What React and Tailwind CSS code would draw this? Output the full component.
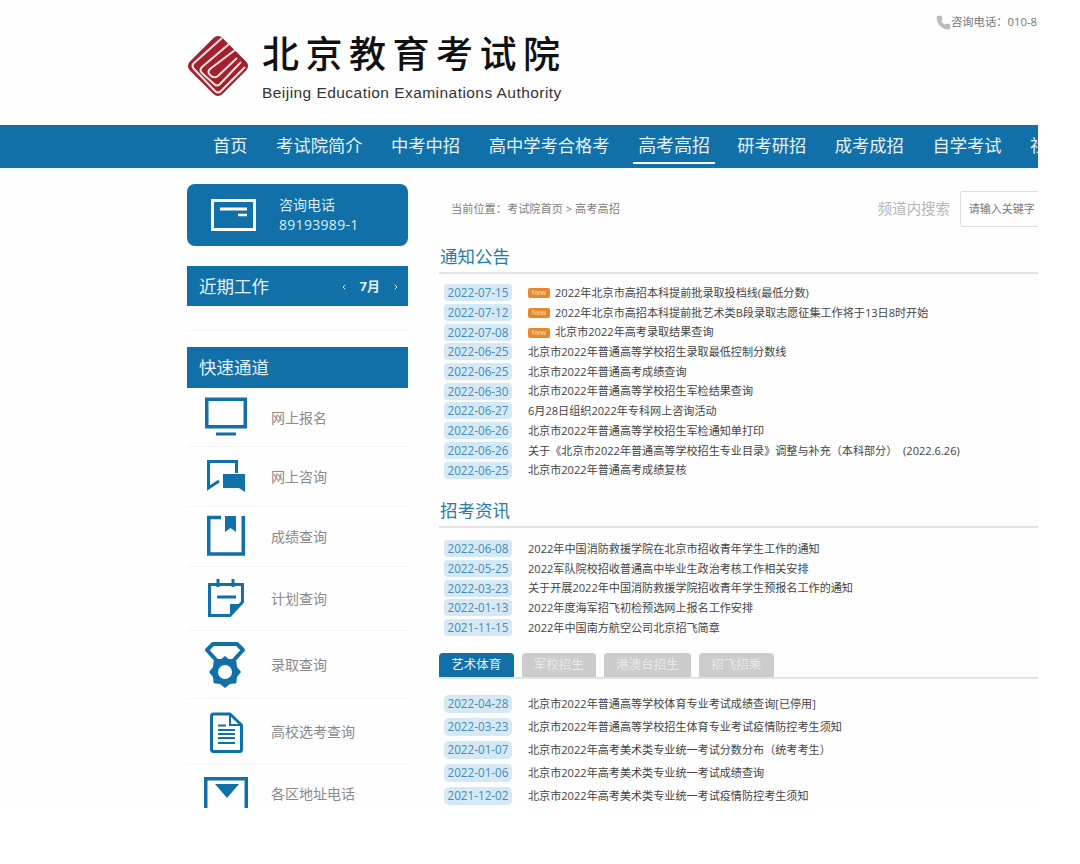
import React from 'react';
import { ChevronLeft, ChevronRight, Phone } from 'lucide-react';

const navItems = ['首页', '考试院简介', '中考中招', '高中学考合格考', '高考高招', '研考研招', '成考成招', '自学考试', '社'];

const notices = [
  ['2022-07-15', '2022年北京市高招本科提前批录取投档线(最低分数)', true],
  ['2022-07-12', '2022年北京市高招本科提前批艺术类B段录取志愿征集工作将于13日8时开始', true],
  ['2022-07-08', '北京市2022年高考录取结果查询', true],
  ['2022-06-25', '北京市2022年普通高等学校招生录取最低控制分数线'],
  ['2022-06-25', '北京市2022年普通高考成绩查询'],
  ['2022-06-30', '北京市2022年普通高等学校招生军检结果查询'],
  ['2022-06-27', '6月28日组织2022年专科网上咨询活动'],
  ['2022-06-26', '北京市2022年普通高等学校招生军检通知单打印'],
  ['2022-06-26', '关于《北京市2022年普通高等学校招生专业目录》调整与补充（本科部分）\u00a0\u00a0(2022.6.26)'],
  ['2022-06-25', '北京市2022年普通高考成绩复核'],
];

const news = [
  ['2022-06-08', '2022年中国消防救援学院在北京市招收青年学生工作的通知'],
  ['2022-05-25', '2022军队院校招收普通高中毕业生政治考核工作相关安排'],
  ['2022-03-23', '关于开展2022年中国消防救援学院招收青年学生预报名工作的通知'],
  ['2022-01-13', '2022年度海军招飞初检预选网上报名工作安排'],
  ['2021-11-15', '2022年中国南方航空公司北京招飞简章'],
];

const arts = [
  ['2022-04-28', '北京市2022年普通高等学校体育专业考试成绩查询[已停用]'],
  ['2022-03-23', '北京市2022年普通高等学校招生体育专业考试疫情防控考生须知'],
  ['2022-01-07', '北京市2022年高考美术类专业统一考试分数分布（统考考生）'],
  ['2022-01-06', '北京市2022年高考美术类专业统一考试成绩查询'],
  ['2021-12-02', '北京市2022年高考美术类专业统一考试疫情防控考生须知'],
];

const BLUE = '#1170a8';

function MonitorIcon() {
  return (
    <svg width="50" height="50" viewBox="0 0 50 50" fill="none">
      <rect x="5.750" y="7.250" width="38.500" height="27.500" stroke={BLUE} strokeWidth="3.500" />
      <rect x="15" y="40.500" width="20" height="3" fill={BLUE} />
    </svg>
  );
}

function ChatIcon() {
  return (
    <svg width="50" height="50" viewBox="0 0 50 50" fill="none">
      <path d="M35.500 21V9.500H7.500V36L18 29" stroke={BLUE} strokeWidth="3" />
      <path d="M22 22h22v18l-6-4H22z" fill={BLUE} />
    </svg>
  );
}

function BookIcon() {
  return (
    <svg width="50" height="50" viewBox="0 0 50 50" fill="none">
      <path d="M20 5.500H7.750V42H42.250V4" stroke={BLUE} strokeWidth="3.500" />
      <path d="M24 4h11v16l-5.500-4-5.500 4z" fill={BLUE} />
    </svg>
  );
}

function CalendarIcon() {
  return (
    <svg width="50" height="50" viewBox="0 0 50 50" fill="none">
      <path d="M8.500 10.500h33V28L29 41.500H8.500z" stroke={BLUE} strokeWidth="3" />
      <path d="M17 5v8M32 5v8" stroke={BLUE} strokeWidth="3" />
      <path d="M16 23h19" stroke={BLUE} strokeWidth="3" />
      <path d="M29 41.500V30h12.500z" fill={BLUE} />
    </svg>
  );
}

function MedalIcon() {
  return (
    <svg width="50" height="50" viewBox="0 0 50 50" fill="none">
      <path d="M12 4h24l6 6-10 11H16L6 10z" stroke={BLUE} strokeWidth="4" strokeLinejoin="round" />
      <polygon points="24,16 29,20 35.300,20.700 36,27 40,32 36,37 35.300,43.300 29,44 24,48 19,44 12.700,43.300 12,37 8,32 12,27 12.700,20.700 19,20" fill={BLUE} />
      <circle cx="24" cy="32" r="7" fill="#fff" />
    </svg>
  );
}

function DocIcon() {
  return (
    <svg width="50" height="50" viewBox="0 0 50 50" fill="none">
      <path d="M12.500 7H29l11.500 11v24.500a2 2 0 0 1-2 2h-26a2 2 0 0 1-2-2V9a2 2 0 0 1 2-2z" stroke={BLUE} strokeWidth="3" strokeLinejoin="round" />
      <path d="M29 7v11h11.500" stroke={BLUE} strokeWidth="2" />
      <path d="M17 18.500h8M17 23h17M17 27h17M17 31h17M17 36h17" stroke={BLUE} strokeWidth="2" />
    </svg>
  );
}

function MailIcon() {
  return (
    <svg width="50" height="50" viewBox="0 0 50 50" fill="none">
      <rect x="4.750" y="9.750" width="40.500" height="36" stroke={BLUE} strokeWidth="3.500" />
      <path d="M14 15h24L26 29z" fill={BLUE} />
    </svg>
  );
}

const channels = [
  ['网上报名', MonitorIcon, 'h-[59px]'],
  ['网上咨询', ChatIcon, 'h-[60px]'],
  ['成绩查询', BookIcon, 'h-[60px]'],
  ['计划查询', CalendarIcon, 'h-[64px]'],
  ['录取查询', MedalIcon, 'h-[68px]'],
  ['高校选考查询', DocIcon, 'h-[66px]'],
  ['各区地址电话', MailIcon, 'h-[58px]'],
];

function Logo() {
  return (
    <svg width="62" height="62" viewBox="0 0 62 62" fill="none">
      <rect x="8" y="8" width="46" height="46" rx="6" fill="#a3202e" transform="rotate(45 31 31)" />
      <g stroke="#f6e2e2" strokeWidth="2" fill="none">
        <path d="M35 3 L7 28 Q4 31 7 34 L28 56 Q31 59 34 56 L58 32" />
        <path d="M42 9 L15 32 Q12 35 15 38 L27 49 Q30 52 33 49 L54 27" />
        <path d="M48 15 L23 34 Q20 37 23 40 Q27 44 31 41 L50 23" />
      </g>
    </svg>
  );
}

function NewsRow({ date, title, isNew, tall }) {
  return (
    <div className={`flex items-center pl-[5px] ${tall ? 'h-[23px]' : 'h-[19.700px]'}`}>
      <span className={`w-[68px] shrink-0 bg-[#d5e9f5] text-center text-[11.700px] leading-[17px] text-[#4a8cb5] ${tall ? 'h-[18px] rounded-[5px]' : 'h-[17px] rounded-[4px]'}`}>{date}</span>
      <span className="ml-[16px] flex min-w-0 items-center whitespace-nowrap pt-[1px] text-[11.100px] text-[#444]">
        {isNew && <span className="mr-[5px] h-[10px] w-[22px] shrink-0 rounded-[2px] bg-[#e8872e] text-center text-[7px] leading-[10px] text-[#fbe3c8]">New</span>}
        {title}
      </span>
    </div>
  );
}

function SectionTitle({ children }) {
  return (
    <h2 className="h-[35px] border-b-2 border-[#e2e2e2] pl-px text-[17.500px] font-normal leading-[34px] text-[#2a7aa8]">{children}</h2>
  );
}

export default function App() {
  return (
    <div className="h-[808px] w-[1038px] overflow-hidden bg-[#fefefe]" style={{ fontFamily: '"Open Sans", "Noto Sans CJK SC", sans-serif' }}>
      <header className="flex h-[125px]">
        <div className="flex w-[936px] shrink-0 items-start gap-[13px] pl-[187px] pt-[35px]">
          <Logo />
          <div className="-mt-[9px]">
            <div className="whitespace-nowrap text-[37px] font-medium leading-[52px] tracking-[6.500px] text-[#111]" style={{ fontFamily: '"Noto Sans CJK SC", sans-serif' }}>北京教育考试院</div>
            <div className="mt-[6px] whitespace-nowrap text-[15.500px] leading-[18px] tracking-[0.450px] text-[#333]" style={{ fontFamily: '"Liberation Sans", sans-serif' }}>Beijing Education Examinations Authority</div>
          </div>
        </div>
        <div className="flex h-[44px] shrink-0 items-center whitespace-nowrap text-[11.300px] text-[#777]">
          <Phone size={15} fill="#bbb" stroke="#bbb" />
          <span>咨询电话：010-8</span>
        </div>
      </header>

      <nav className="flex h-[43px] items-center gap-[18.500px] overflow-hidden bg-[#1170a8] pl-[208px]">
        {navItems.map((item) => (
          <a key={item} className={`shrink-0 whitespace-nowrap px-[5px] text-[#e6f2f9] ${item === '高考高招' ? '-mr-[1.500px] h-[35px] border-b-2 border-white text-[18px] leading-[33px]' : 'h-[39px] text-[17.300px] leading-[38px]'}`}>{item}</a>
        ))}
      </nav>

      <main className="flex pl-[187px] pt-[16px]">
        <aside className="w-[221px] shrink-0">
          <div className="flex h-[62px] items-center rounded-[8px] bg-[#1170a8] pl-[24px] text-white">
            <svg width="45" height="32" viewBox="0 0 45 32" fill="none">
              <rect x="1.500" y="1.500" width="42" height="29" stroke="#fff" strokeWidth="3" />
              <path d="M9 10h27" stroke="#fff" strokeWidth="3" />
              <path d="M27 16h9" stroke="#fff" strokeWidth="2.500" />
            </svg>
            <div className="ml-[23px] text-[14px] leading-[20px] text-[#dcecf6]">
              <div>咨询电话</div>
              <div className="tracking-[0.300px]">89193989-1</div>
            </div>
          </div>

          <div className="mt-[20px] flex h-[40px] items-center justify-between bg-[#1170a8] pl-[12px] pr-[8px] pt-[1px] text-[#e6f2f9]">
            <span className="text-[17.500px]">近期工作</span>
            <span className="flex items-center text-[13px] font-bold">
              <ChevronLeft size={8} strokeWidth={3} />
              <span className="mx-[12px]">7月</span>
              <ChevronRight size={8} strokeWidth={3} />
            </span>
          </div>
          <div className="h-[25px] border-b border-[#f5f5f5]" />

          <div className="mt-[16px] flex h-[41px] items-center bg-[#1170a8] pl-[12px] text-[17.500px] text-[#e6f2f9]">快速通道</div>
          {channels.map(([label, Icon, height]) => (
            <div key={label} className={`flex items-center border-b border-[#f6f6f6] pl-[14px] ${height}`}>
              <Icon />
              <span className="ml-[20px] text-[14px] text-[#8a8a8a]">{label}</span>
            </div>
          ))}
        </aside>

        <section className="ml-[31px] min-w-0 flex-1 overflow-hidden">
          <div className="flex h-[43px] items-center whitespace-nowrap pl-[12px] pt-[7px]">
            <span className="text-[11.200px] text-[#808080]">当前位置：考试院首页 &gt; 高考高招</span>
            <span className="ml-[258px] text-[14.400px] text-[#b5b5b5]">频道内搜索</span>
            <div className="ml-[10px] flex h-[36px] w-[100px] shrink-0 items-center rounded-[3px] border border-[#dddddd] pl-[8px] text-[11px] text-[#777]">请输入关键字</div>
          </div>

          <div className="mt-[12px]">
            <SectionTitle>通知公告</SectionTitle>
          </div>
          <div className="mt-[9px]">
            {notices.map(([date, title, isNew]) => (
              <NewsRow key={date + title} date={date} title={title} isNew={isNew} />
            ))}
          </div>

          <div className="mt-[13px]">
            <SectionTitle>招考资讯</SectionTitle>
          </div>
          <div className="mt-[11px]">
            {news.map(([date, title]) => (
              <NewsRow key={date + title} date={date} title={title} />
            ))}
          </div>

          <div className="mt-[16px] flex h-[26px] gap-[8px] border-b-2 border-[#e2e2e2]">
            {['艺术体育', '军校招生', '港澳台招生', '招飞招乘'].map((tab, i) => (
              <span key={tab} className={`h-[24px] rounded-t-[4px] px-[12.250px] text-center text-[12.500px] leading-[24px] ${i === 0 ? 'bg-[#1170a8] text-[#e6f2f9]' : 'bg-[#cccccc] text-[#e9e9e9]'}`}>{tab}</span>
            ))}
          </div>
          <div className="mt-[13px]">
            {arts.map(([date, title]) => (
              <NewsRow key={date + title} date={date} title={title} tall />
            ))}
          </div>
        </section>
      </main>
    </div>
  );
}
